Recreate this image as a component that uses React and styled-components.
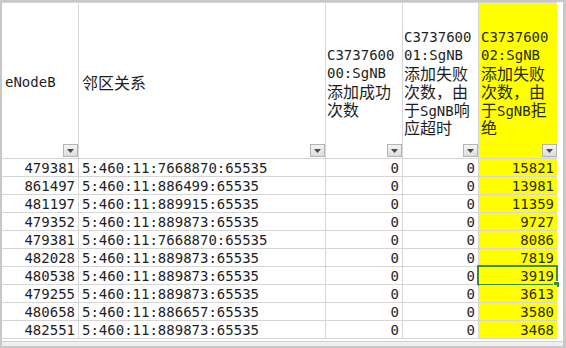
import React from "react";
import styled, { createGlobalStyle } from "styled-components";

const Global = createGlobalStyle`
  html, body { margin: 0; padding: 0; background: #ffffff; }
  #root { width: 566px; height: 348px; }
`;

const Frame = styled.div`
  box-sizing: border-box;
  width: 566px;
  height: 348px;
  border-top: 2px solid #c8c8c8;
  border-left: 2px solid #c8c8c8;
  border-right: 3px solid #c8c8c8;
  border-bottom: 2px solid #c8c8c8;
  background: #ffffff;
  display: flex;
  flex-direction: column;
  overflow: hidden;
  font-family: "DejaVu Sans Mono", "Noto Sans CJK SC", monospace;
  font-size: 14px;
  color: #1e1e1e;
`;

const Sheet = styled.div`
  display: grid;
  grid-template-columns: 76px 246px 76px 75px 78px;
  grid-template-rows: 155px repeat(10, 17px);
  gap: 1px;
  padding: 1px 0 1px 0;
  background: #d6d6d6;
  width: 555px;
`;

const Footer = styled.div`
  flex: 1;
  margin-top: 2px;
  border-top: 1px solid #d0d0d0;
  background: #f0f0f0;
`;

const HeadCell = styled.div`
  position: relative;
  background: ${(p) => (p.$hl ? "#ffff00" : "#ffffff")};
  display: flex;
  flex-direction: column;
  justify-content: center;
  padding-left: ${(p) => p.$pl || 2}px;
  padding-top: 2px;
  line-height: 18px;
  white-space: nowrap;
  color: ${(p) => (p.$hl ? "#2a2a00" : "#1e1e1e")};
`;

const Line = styled.div`
  height: 18px;
`;

const Cjk = styled.span`
  font-family: "Noto Sans CJK SC", sans-serif;
  font-size: 16px;
  line-height: 18px;
`;

const FilterBtn = styled.div`
  position: absolute;
  right: 0;
  bottom: 1px;
  width: 15px;
  height: 13px;
  box-sizing: border-box;
  border: 1px solid #b4b4b4;
  background: linear-gradient(#f4f4f4, #dcdcdc);
  display: flex;
  align-items: center;
  justify-content: center;
`;

const Cell = styled.div`
  position: relative;
  background: ${(p) => (p.$hl ? "#ffff00" : "#ffffff")};
  display: flex;
  align-items: flex-end;
  justify-content: ${(p) => (p.$right ? "flex-end" : "flex-start")};
  padding: 0 ${(p) => (p.$right ? 3 : 0)}px 0 ${(p) => (p.$right ? 0 : 3)}px;
  line-height: 16px;
  white-space: nowrap;
  color: ${(p) => (p.$hl ? "#2a2a00" : "#1e1e1e")};
`;

const Selection = styled.div`
  position: absolute;
  left: -2px;
  top: -2px;
  right: -1px;
  bottom: -2px;
  border: 2px solid #3f8a3a;
  pointer-events: none;
`;

const Handle = styled.div`
  position: absolute;
  right: -4px;
  bottom: -4px;
  width: 5px;
  height: 5px;
  background: #3f8a3a;
  border: 1px solid #ffffff;
`;

const Arrow = () => (
  <svg width="7" height="4" viewBox="0 0 7 4">
    <path d="M0 0 L7 0 L3.5 4 Z" fill="#4a4a4a" />
  </svg>
);

const rows = [
  ["479381", "5:460:11:7668870:65535", "0", "0", "15821"],
  ["861497", "5:460:11:886499:65535", "0", "0", "13981"],
  ["481197", "5:460:11:889915:65535", "0", "0", "11359"],
  ["479352", "5:460:11:889873:65535", "0", "0", "9727"],
  ["479381", "5:460:11:7668870:65535", "0", "0", "8086"],
  ["482028", "5:460:11:889873:65535", "0", "0", "7819"],
  ["480538", "5:460:11:889873:65535", "0", "0", "3919"],
  ["479255", "5:460:11:889873:65535", "0", "0", "3613"],
  ["480658", "5:460:11:886657:65535", "0", "0", "3580"],
  ["482551", "5:460:11:889873:65535", "0", "0", "3468"],
];

export default function App() {
  return (
    <>
      <Global />
      <Frame>
        <Sheet>
          <HeadCell $pl={3}>
            <Line>eNodeB</Line>
            <FilterBtn><Arrow /></FilterBtn>
          </HeadCell>
          <HeadCell $pl={3}>
            <Line><Cjk>邻区关系</Cjk></Line>
            <FilterBtn><Arrow /></FilterBtn>
          </HeadCell>
          <HeadCell $pl={1}>
            <Line>C3737600</Line>
            <Line>00:SgNB</Line>
            <Line><Cjk>添加成功</Cjk></Line>
            <Line><Cjk>次数</Cjk></Line>
            <FilterBtn><Arrow /></FilterBtn>
          </HeadCell>
          <HeadCell $pl={1}>
            <Line>C3737600</Line>
            <Line>01:SgNB</Line>
            <Line><Cjk>添加失败</Cjk></Line>
            <Line><Cjk>次数，由</Cjk></Line>
            <Line><Cjk>于</Cjk>SgNB<Cjk>响</Cjk></Line>
            <Line><Cjk>应超时</Cjk></Line>
            <FilterBtn><Arrow /></FilterBtn>
          </HeadCell>
          <HeadCell $pl={2} $hl>
            <Line>C3737600</Line>
            <Line>02:SgNB</Line>
            <Line><Cjk>添加失败</Cjk></Line>
            <Line><Cjk>次数，由</Cjk></Line>
            <Line><Cjk>于</Cjk>SgNB<Cjk>拒</Cjk></Line>
            <Line><Cjk>绝</Cjk></Line>
            <FilterBtn><Arrow /></FilterBtn>
          </HeadCell>
          {rows.map((r, i) => (
            <React.Fragment key={i}>
              <Cell $right>{r[0]}</Cell>
              <Cell>{r[1]}</Cell>
              <Cell $right>{r[2]}</Cell>
              <Cell $right>{r[3]}</Cell>
              <Cell $right $hl>
                {r[4]}
                {i === 6 && (
                  <Selection>
                    <Handle />
                  </Selection>
                )}
              </Cell>
            </React.Fragment>
          ))}
        </Sheet>
        <Footer />
      </Frame>
    </>
  );
}
